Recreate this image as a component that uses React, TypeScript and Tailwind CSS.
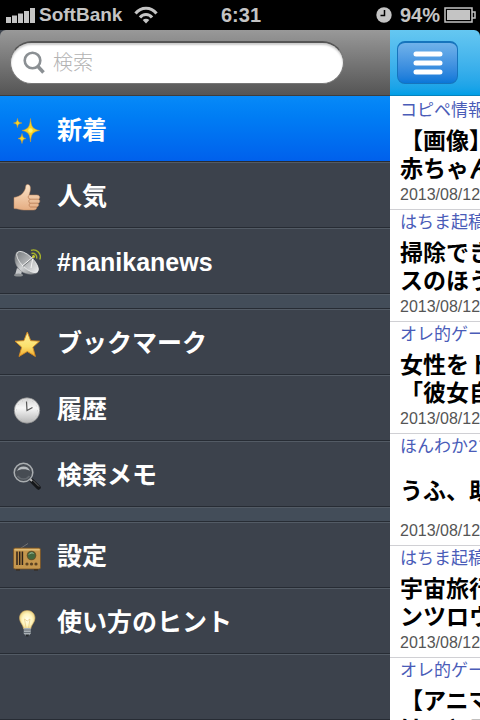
import { Fragment, type ReactNode } from 'react';

interface MenuItem {
  label: string;
  icon: ReactNode;
}

interface Article {
  source: string;
  lines: string[];
}

const SparklesIcon = () => (
  <svg viewBox="0 0 28 28" className="size-7">
    <g fill="#f9d423" stroke="#d99a2b" strokeWidth="0.5">
      <path d="M17.500 1.500C18.300 9.500 19.300 12 26.500 13.500C19.300 15 18.300 17 17.500 25C16.700 17 15.700 15 9 13.500C15.700 12 16.700 9.500 17.500 1.500Z" />
      <path d="M4.500 1.500C5 4.500 5.500 5.500 9 6C5.500 6.600 5 7.500 4.500 10.500C4 7.500 3.500 6.600 0.500 6C3.500 5.500 4 4.500 4.500 1.500Z" />
      <path d="M9 16.500C9.500 19.800 10 20.900 13 21.500C10 22.200 9.500 23.200 9 26.500C8.500 23.200 8 22.200 5 21.500C8 20.900 8.500 19.800 9 16.500Z" />
    </g>
    <circle cx="17.500" cy="13.500" r="2.200" fill="#fff36a" />
  </svg>
);

const ThumbIcon = () => (
  <svg viewBox="0 0 28 28" className="size-7">
    <defs>
      <linearGradient id="skin" x1="0" y1="0" x2="0" y2="1">
        <stop offset="0" stopColor="#fbe3c8" />
        <stop offset="1" stopColor="#e5ad82" />
      </linearGradient>
    </defs>
    <path d="M1 14.500C4 14 7 13 9 11C11.500 8.500 12.500 6 12.800 3C13 0.800 16.800 0.800 17.300 4C17.700 7 16.800 9.500 16 12H24C27 12 27.500 15.500 25.500 16.200C27.500 17 27 20 25 20.300C26.300 21.500 25.600 23.700 23.700 24C24 26 22.500 27 20.500 27H11C7 27 5 25.500 1 25.500Z" fill="url(#skin)" stroke="#c58c63" strokeWidth="0.500" />
    <path d="M16 12.300C14.800 13.200 15 15.800 17 16.200H25.500M17 16.300C15.300 17.300 15.500 19.800 17 20.200H25M17 20.300C15.700 21.500 16 23.500 17.500 24H23.700" fill="none" stroke="#b87a52" strokeWidth="0.800" />
  </svg>
);

const SatelliteIcon = () => (
  <svg viewBox="0 0 28 28" className="size-7">
    <defs>
      <linearGradient id="dish" x1="0" y1="0" x2="1" y2="1">
        <stop offset="0" stopColor="#5e6265" />
        <stop offset="0.500" stopColor="#d0d2d3" />
        <stop offset="1" stopColor="#7b7f82" />
      </linearGradient>
      <linearGradient id="bowl" x1="0" y1="0" x2="1" y2="0">
        <stop offset="0" stopColor="#7d8184" />
        <stop offset="1" stopColor="#e8e9ea" />
      </linearGradient>
    </defs>
    <path d="M4 19L9 22L8 26H2Z" fill="#c5c7c9" />
    <ellipse cx="5.500" cy="26" rx="4.500" ry="1.600" fill="#8b8f92" />
    <path d="M4 3C0 9 2 17 8 22C13 26 22 26 25 23Z" fill="url(#dish)" stroke="#8e9193" strokeWidth="0.500" />
    <ellipse cx="14.500" cy="13" rx="14" ry="6" transform="rotate(44 14.500 13)" fill="url(#bowl)" stroke="#eceded" strokeWidth="0.800" />
    <path d="M9 17L20 8M18 19L20 8" stroke="#f5f5f5" strokeWidth="1" />
    <path d="M10 17.500L20.500 8.500" stroke="#5c6063" strokeWidth="0.700" />
    <circle cx="20.500" cy="7.500" r="1.500" fill="#c8cc35" />
    <path d="M18.500 4.500A4 4 0 0 1 23.500 9.500M18 1.300A7 7 0 0 1 26.800 10.500" fill="none" stroke="#a6b32b" strokeWidth="1.400" />
  </svg>
);

const StarIcon = () => (
  <svg viewBox="0 0 28 28" className="size-7">
    <defs>
      <linearGradient id="star" x1="0" y1="0" x2="0" y2="1">
        <stop offset="0" stopColor="#fff0a0" />
        <stop offset="0.600" stopColor="#fbe06c" />
        <stop offset="1" stopColor="#f2a92c" />
      </linearGradient>
    </defs>
    <path d="M14.300 2L17.700 10.700L26.500 11.200L19.800 17.200L22.400 26.500L14.300 21.500L6 26.500L8.700 17.200L2 11.200L10.900 10.700Z" fill="url(#star)" stroke="#d98d1f" strokeWidth="0.900" strokeLinejoin="round" />
  </svg>
);

const ClockIcon = () => (
  <svg viewBox="0 0 28 28" className="size-7">
    <defs>
      <linearGradient id="clock" x1="0" y1="0" x2="0" y2="1">
        <stop offset="0" stopColor="#d4d4d4" />
        <stop offset="0.400" stopColor="#f7f7f7" />
        <stop offset="1" stopColor="#b5b5b5" />
      </linearGradient>
    </defs>
    <circle cx="14" cy="14.500" r="12.700" fill="url(#clock)" stroke="#8d8d8d" strokeWidth="0.700" />
    <circle cx="14" cy="14.500" r="10.500" fill="none" stroke="#bbb" strokeWidth="0.800" strokeDasharray="0.800 4.700" />
    <path d="M13.500 5.500L14 14.500L19.500 11.500" fill="none" stroke="#555" strokeWidth="1.200" />
  </svg>
);

const MagnifierIcon = () => (
  <svg viewBox="0 0 28 28" className="size-7">
    <path d="M19 19L25.500 25.500" stroke="#15171a" strokeWidth="4.500" strokeLinecap="round" />
    <path d="M20 18.500L26 24.500" stroke="#777" strokeWidth="0.900" />
    <path d="M16.500 16.500L19 19" stroke="#bbb" strokeWidth="2" />
    <circle cx="10.500" cy="10.500" r="9.300" fill="#474c53" stroke="#a9adb0" strokeWidth="1.500" />
    <path d="M4 9A7 7 0 0 1 17 9C14 6.800 7 6.800 4 9Z" fill="#b7bbbf" />
    <path d="M4.500 14A7.500 7.500 0 0 0 16.500 14" fill="none" stroke="#62676d" strokeWidth="1.500" />
  </svg>
);

const RadioIcon = () => (
  <svg viewBox="0 0 28 28" className="size-7">
    <path d="M6.500 6L15 0.500" stroke="#777" strokeWidth="0.900" />
    <path d="M3 25H7V27.500H3ZM21 25H25V27.500H21Z" fill="#33271a" />
    <rect x="0.500" y="5" width="27" height="21" rx="1.500" fill="#c4964d" stroke="#775020" strokeWidth="0.700" />
    <rect x="1.500" y="6" width="25" height="1.500" fill="#dfbb75" />
    <path d="M4 8.500V22M6.700 8.500V22M9.400 8.500V22" stroke="#2c2119" strokeWidth="1.500" />
    <circle cx="18.500" cy="12.500" r="4.800" fill="#665329" />
    <circle cx="18.500" cy="12.500" r="3.700" fill="#42673e" />
    <path d="M16 11.500A3 3 0 0 1 20.500 10.500" stroke="#a9c4a2" strokeWidth="1" fill="none" />
    <g fill="#5b4222">
      <circle cx="14" cy="21" r="1.600" />
      <circle cx="18.500" cy="21" r="1.600" />
      <circle cx="23" cy="21" r="1.600" />
    </g>
  </svg>
);

const BulbIcon = () => (
  <svg viewBox="0 0 28 28" className="size-7">
    <defs>
      <radialGradient id="bulb">
        <stop offset="0" stopColor="#fffef0" />
        <stop offset="0.650" stopColor="#fff4bc" />
        <stop offset="1" stopColor="#ecd487" />
      </radialGradient>
    </defs>
    <path d="M14.200 1.500C9.500 1.500 6.500 5 6.500 9C6.500 13.500 10 15.500 10.700 20H17.700C18.400 15.500 22 13.500 22 9C22 5 19 1.500 14.200 1.500Z" fill="url(#bulb)" stroke="#cfaa62" strokeWidth="0.600" />
    <path d="M13 19L11.500 10L14.200 12L17 10L15.500 19" fill="none" stroke="#e6c983" strokeWidth="0.700" />
    <path d="M10.800 19H17.700V24.500L16 26.500H12.500L10.800 24.500Z" fill="#a9b0b5" />
    <path d="M10.800 21H17.700M10.800 23.500H17.700" stroke="#626a70" strokeWidth="0.900" />
    <path d="M12.300 25.500H16.300L15.300 27.500H13.300Z" fill="#25292d" />
  </svg>
);

const MENU_GROUPS: MenuItem[][] = [
  [
    { label: '新着', icon: <SparklesIcon /> },
    { label: '人気', icon: <ThumbIcon /> },
    { label: '#nanikanews', icon: <SatelliteIcon /> },
  ],
  [
    { label: 'ブックマーク', icon: <StarIcon /> },
    { label: '履歴', icon: <ClockIcon /> },
    { label: '検索メモ', icon: <MagnifierIcon /> },
  ],
  [
    { label: '設定', icon: <RadioIcon /> },
    { label: '使い方のヒント', icon: <BulbIcon /> },
  ],
];

const ARTICLES: Article[] = [
  { source: 'コピペ情報', lines: ['【画像】', '赤ちゃん'] },
  { source: 'はちま起稿', lines: ['掃除でき', 'スのほう'] },
  { source: 'オレ的ゲー', lines: ['女性をト', '「彼女自'] },
  { source: 'ほんわか2ち', lines: ['うふ、助'] },
  { source: 'はちま起稿', lines: ['宇宙旅行', 'ンツロウ'] },
  { source: 'オレ的ゲー', lines: ['【アニマ', 'はっと感'] },
];

function StatusBar() {
  return (
    <div className="grid h-[30px] shrink-0 grid-cols-[1fr_auto_1fr] items-center bg-black pr-1 pl-1.5 text-xl font-bold text-[#c4c4c4]">
      <div className="flex items-center">
        <svg viewBox="0 0 29 16" className="h-4 w-[29px]" fill="#c4c4c4">
          <path d="M0 10h5v6H0zM6 8.500h5V16H6zM12 6.500h5V16h-5zM18 4h5v12h-5zM24 1h5v15h-5z" />
        </svg>
        <span className="ml-1 text-[19px]">SoftBank</span>
        <svg viewBox="0 0 24 18" className="ml-3 h-[18px] w-6" fill="none" stroke="#c4c4c4" strokeWidth="3">
          <path d="M1.500 7.500C7 0.500 17 0.500 22.500 7.500M6 11.500C9 7.500 15 7.500 18 11.500" />
          <path d="M12 17.500L8.700 14C10.500 12.300 13.500 12.300 15.300 14Z" fill="#c4c4c4" stroke="none" />
        </svg>
      </div>
      <span>6:31</span>
      <div className="flex items-center justify-end">
        <svg viewBox="0 0 16 16" className="size-4">
          <circle cx="8" cy="8" r="7.700" fill="#c4c4c4" />
          <path d="M8.500 3V8.500H4.500" fill="none" stroke="#000" strokeWidth="1.500" />
        </svg>
        <span className="ml-2">94%</span>
        <svg viewBox="0 0 32 16" className="ml-1 h-4 w-8">
          <rect x="1" y="1" width="27" height="14" fill="none" stroke="#c4c4c4" strokeWidth="1.500" />
          <rect x="3" y="3" width="23" height="10" fill="#c4c4c4" />
          <path d="M28 5H31V11H28" fill="none" stroke="#c4c4c4" strokeWidth="1.500" />
        </svg>
      </div>
    </div>
  );
}

function SearchBar() {
  return (
    <form className="h-[66px] shrink-0 rounded-tl-md border-b border-[#3d3d3d] bg-linear-to-b from-[#999] to-[#555] pt-[11px] pr-[46px] pl-2.5">
      <label className="flex h-[43px] items-center rounded-full border border-t-2 border-[#777] border-t-[#555] bg-white pl-3 shadow-[inset_0_2px_2px_#ccc]">
        <svg viewBox="0 0 22 24" className="h-6 w-[22px] shrink-0" fill="none" stroke="#8b9094">
          <circle cx="9.500" cy="9.500" r="7.800" strokeWidth="2.600" />
          <path d="M15 15.500L20.500 21.500" strokeWidth="3.500" />
        </svg>
        <input
          type="search"
          aria-label="検索"
          placeholder="検索"
          className="ml-2 w-full min-w-0 bg-transparent text-xl font-light text-black outline-none placeholder:text-[#b3b3b3]"
        />
      </label>
    </form>
  );
}

function MenuRow({ item, active }: { item: MenuItem; active: boolean }) {
  return (
    <li>
      <button
        className={`flex h-[66px] w-full items-center border-b border-b-[#272c34] pt-1 pl-[13px] text-left text-[25px] font-bold text-white ${
          active
            ? 'bg-linear-to-b from-[#078af8] to-[#0060ec]'
            : 'border-t border-t-[#535b65] bg-[#3c424c]'
        }`}
      >
        {item.icon}
        <span className="ml-4">{item.label}</span>
      </button>
    </li>
  );
}

function Sidebar() {
  return (
    <aside className="flex min-w-0 flex-1 flex-col bg-[#3c424c]">
      <SearchBar />
      <nav className="flex flex-1 flex-col">
        {MENU_GROUPS.map((group, i) => (
          <Fragment key={i}>
            {i > 0 && <hr className="h-[15px] border-t border-b border-t-[#535b65] border-b-[#272c34] bg-[#434d59]" />}
            <ul>
              {group.map((item, j) => (
                <MenuRow key={item.label} item={item} active={i === 0 && j === 0} />
              ))}
            </ul>
          </Fragment>
        ))}
        <div className="flex-1 border-y border-t-[#535b65] border-b-[#272c34]" />
      </nav>
    </aside>
  );
}

function ArticleRow({ article }: { article: Article }) {
  return (
    <li className="h-28 border-b border-[#d0d0d4] pt-px pl-2.5 whitespace-nowrap">
      <p className="h-7 text-[17px] leading-6 text-[#4a5cb8]">{article.source}</p>
      <h2 className="flex h-14 flex-col justify-center text-[23px] leading-7 font-bold text-black">
        {article.lines.map(line => <span key={line}>{line}</span>)}
      </h2>
      <time className="block text-base leading-6 text-[#555]">2013/08/12</time>
    </li>
  );
}

export default function App() {
  return (
    <div
      lang="ja"
      className="flex h-screen flex-col overflow-hidden bg-black font-['Liberation_Sans','Noto_Sans_CJK_JP',sans-serif]"
    >
      <StatusBar />
      <div className="flex min-h-0 flex-1">
        <Sidebar />
        <main className="flex w-[90px] shrink-0 flex-col overflow-hidden">
          <header className="h-[66px] shrink-0 rounded-tr-md border-b border-[#0783bd] bg-linear-to-b from-[#65c7f1] to-[#009fe7] pt-[11px] pl-[7px]">
            <button
              aria-label="メニュー"
              className="flex h-[43px] w-[61px] items-center justify-center rounded-lg border border-t-2 border-[#1674bd] bg-linear-to-b from-[#70b2ea] to-[#0877d8]"
            >
              <svg viewBox="0 0 30 24" className="h-6 w-[30px]" stroke="#fff" strokeWidth="5" strokeLinecap="round">
                <path d="M3 3H27M3 12H27M3 21H27" />
              </svg>
            </button>
          </header>
          <ul className="min-h-0 flex-1 overflow-hidden bg-white pt-0.5">
            {ARTICLES.map((article, i) => (
              <ArticleRow key={i} article={article} />
            ))}
          </ul>
        </main>
      </div>
    </div>
  );
}
